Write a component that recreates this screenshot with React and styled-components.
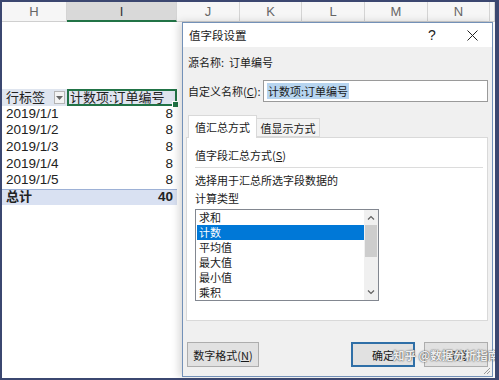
import React from 'react';
import styled, { createGlobalStyle } from 'styled-components';

const GlobalStyle = createGlobalStyle`
  html, body { margin: 0; padding: 0; background: #fff; }
  body { font-family: "Noto Sans CJK SC", sans-serif; }
`;

const Frame = styled.div`
  position: relative;
  width: 499px;
  height: 380px;
  box-sizing: border-box;
  border-style: solid;
  border-color: #3b4770;
  border-width: 2px 4px 2px 2px;
  background: #fff;
  overflow: hidden;
`;

// 列标题栏
const ColumnBar = styled.div`
  display: flex;
  height: 20px;
  background: #f6f6f6;
`;

const ColHead = styled.div`
  flex: ${({ $w }) => ($w ? 'none' : '1')};
  width: ${({ $w }) => ($w ? `${$w}px` : 'auto')};
  box-sizing: border-box;
  border-right: 1px solid #d4d4d4;
  border-bottom: ${({ $active }) => ($active ? '2px solid #217346' : '1px solid #cfcfcf')};
  background: ${({ $active }) => ($active ? '#d9d9d9' : 'transparent')};
  display: flex;
  align-items: center;
  justify-content: center;
  font: 13px "Liberation Sans", sans-serif;
  color: ${({ $active }) => ($active ? '#333' : '#666')};
`;

// 数据透视表
const Pivot = styled.div`
  margin-top: 67px;
  width: 175px;
  font: 13.5px/16px "Liberation Sans", "Noto Sans CJK SC", sans-serif;
  color: #222;
`;

const rowBg = { head: '#dfe5ef', data: 'transparent', total: '#d9e1f2' };

const PivotRow = styled.div`
  display: grid;
  grid-template-columns: 65px 110px;
  height: 16.6px;
  align-items: center;
  overflow: visible;
  background: ${({ $kind }) => rowBg[$kind]};
  font-weight: ${({ $kind }) => ($kind === 'total' ? 700 : 400)};
  box-shadow: ${({ $kind }) => ($kind === 'total' ? 'inset 0 1px 0 #9db1d6' : 'none')};
`;

const LabelCell = styled.div`
  padding-left: 4px;
  height: 16px;
  display: flex;
  align-items: center;
  justify-content: space-between;
  white-space: nowrap;
  font-size: ${({ $cjk }) => ($cjk ? '13px' : 'inherit')};
`;

const ValueCell = styled.div`
  position: relative;
  height: ${({ $selected }) => ($selected ? '17px' : '16px')};
  box-sizing: border-box;
  display: flex;
  align-items: center;
  justify-content: ${({ $selected }) => ($selected ? 'flex-start' : 'flex-end')};
  padding: 0 4px 0 1px;
  border: ${({ $selected }) => ($selected ? '2px solid #217346' : 'none')};
  white-space: nowrap;
  font-size: ${({ $selected }) => ($selected ? '13px' : 'inherit')};
`;

const FillHandle = styled.span`
  position: absolute;
  right: -4px;
  bottom: -4px;
  width: 5px;
  height: 5px;
  background: #217346;
  border: 1px solid #fff;
`;

const FilterButton = styled.span`
  width: 11px;
  height: 13px;
  margin-right: 2px;
  box-sizing: border-box;
  border: 1px solid #b5b5b5;
  background: #f4f4f4;
  display: flex;
  align-items: center;
  justify-content: center;
`;

// 对话框
const Dialog = styled.div`
  position: absolute;
  left: 180px;
  top: 20px;
  width: 311px;
  height: 355px;
  box-sizing: border-box;
  border: 1px solid #7391b8;
  background: #f0f0f0;
  box-shadow: -3px 0 8px rgba(0, 0, 0, 0.16);
  display: flex;
  flex-direction: column;
  font: 11px "Noto Sans CJK SC", sans-serif;
  color: #1a1a1a;
`;

const TitleBar = styled.div`
  height: 24px;
  flex: none;
  background: #fff;
  display: flex;
  align-items: center;
  padding-left: 6px;
`;

const TitleText = styled.div`
  flex: 1;
  font-size: 11.5px;
`;

const TitleButton = styled.div`
  width: 40px;
  height: 24px;
  display: flex;
  align-items: center;
  justify-content: center;
  font: 14px "Liberation Sans", sans-serif;
  color: #222;
`;

const Body = styled.div`
  flex: 1;
  display: flex;
  flex-direction: column;
  padding: 0 4px 0 3px;
`;

const TextRow = styled.div`
  margin: ${({ $mt }) => $mt}px 0 0 ${({ $ml }) => $ml || 0}px;
  line-height: 16px;
  height: 16px;
  white-space: nowrap;
`;

const NameRow = styled.div`
  margin: 10px 0 0 2px;
  height: 22px;
  display: flex;
  align-items: center;
`;

const NameLabel = styled.div`
  width: 75px;
  flex: none;
  white-space: nowrap;
`;

const NameInput = styled.div`
  flex: 1;
  height: 22px;
  box-sizing: border-box;
  border: 1px solid #9a9a9a;
  background: #fff;
  display: flex;
  align-items: center;
  padding-left: 3px;
`;

const Selected = styled.span`
  background: #b7d5f0;
  line-height: 16px;
  padding: 0 1px;
`;

const Tabs = styled.div`
  margin-top: 13px;
  padding-left: 2px;
  display: flex;
  align-items: flex-end;
  height: 22px;
  position: relative;
  z-index: 1;
`;

const Tab = styled.div`
  width: ${({ $w }) => $w}px;
  height: ${({ $active }) => ($active ? 23 : 19)}px;
  box-sizing: border-box;
  border: 1px solid #d9d9d9;
  border-bottom: ${({ $active }) => ($active ? 'none' : '1px solid #d9d9d9')};
  border-left: ${({ $first }) => ($first ? '1px solid #d9d9d9' : 'none')};
  background: ${({ $active }) => ($active ? '#fff' : '#f3f3f3')};
  display: flex;
  align-items: center;
  justify-content: center;
  margin-bottom: ${({ $active }) => ($active ? -1 : 0)}px;
`;

const Panel = styled.div`
  height: 184px;
  box-sizing: border-box;
  border: 1px solid #d9d9d9;
  background: #fff;
  padding: 9px 4px 0 8px;
  display: flex;
  flex-direction: column;
`;

const Separator = styled.div`
  margin-top: 4px;
  height: 1px;
  background: #dcdcdc;
`;

const ListBox = styled.div`
  margin-top: 3px;
  width: 184px;
  height: 92px;
  box-sizing: border-box;
  border: 1px solid #828790;
  display: flex;
`;

const Items = styled.div`
  flex: 1;
  padding-left: 1px;
`;

const Item = styled.div`
  height: 15px;
  line-height: 15px;
  padding-left: 2px;
  background: ${({ $selected }) => ($selected ? '#0078d7' : 'transparent')};
  color: ${({ $selected }) => ($selected ? '#fff' : '#1a1a1a')};
`;

const ScrollBar = styled.div`
  width: 14px;
  background: #f0f0f0;
  display: flex;
  flex-direction: column;
`;

const ScrollArrow = styled.div`
  height: 15px;
  display: flex;
  align-items: center;
  justify-content: center;
`;

const Thumb = styled.div`
  height: 32px;
  margin: 0 1px;
  background: #cdcdcd;
`;

const ScrollTrack = styled.div`
  flex: 1;
`;

const ButtonRow = styled.div`
  margin: 21px 0 0 1px;
  height: 25px;
  display: flex;
  gap: 9px;
`;

const Button = styled.div`
  width: ${({ $w }) => $w}px;
  box-sizing: border-box;
  border: ${({ $primary }) => ($primary ? '2px solid #2f6fa7' : '1px solid #adadad')};
  background: #e1e1e1;
  display: flex;
  align-items: center;
  justify-content: center;
  margin-left: ${({ $push }) => ($push ? 'auto' : '0')};
`;

const Watermark = styled.div`
  position: absolute;
  left: 210px;
  top: 324px;
  font: 700 11.5px "Noto Sans CJK SC", sans-serif;
  color: rgba(255, 255, 255, 0.92);
  text-shadow: 0 0 1px #444, 0 0 2px #777;
  white-space: nowrap;
`;

const Grip = styled.svg`
  position: absolute;
  right: 1px;
  bottom: 1px;
`;

const columns = [
  { id: 'H', w: 65 },
  { id: 'I', w: 110, active: true },
  { id: 'J', w: 63 },
  { id: 'K', w: 62 },
  { id: 'L', w: 63 },
  { id: 'M', w: 63 },
  { id: 'N', w: 62 },
  { id: '' },
];

const rows = ['2019/1/1', '2019/1/2', '2019/1/3', '2019/1/4', '2019/1/5'];
const types = ['求和', '计数', '平均值', '最大值', '最小值', '乘积'];

const Chevron = ({ up }) => (
  <svg width="8" height="5" viewBox="0 0 8 5">
    <path d={up ? 'M1 4.5 L4 1.5 L7 4.5' : 'M1 0.5 L4 3.5 L7 0.5'} fill="none" stroke="#606060" strokeWidth="1.2" />
  </svg>
);

export default function App() {
  return (
    <>
      <GlobalStyle />
      <Frame>
        <ColumnBar>
          {columns.map((c, i) => (
            <ColHead key={i} $w={c.w} $active={c.active}>{c.id}</ColHead>
          ))}
        </ColumnBar>

        <Pivot>
          <PivotRow $kind="head">
            <LabelCell $cjk>
              行标签
              <FilterButton>
                <svg width="7" height="4" viewBox="0 0 7 4"><path d="M0 0 H7 L3.5 4 Z" fill="#666" /></svg>
              </FilterButton>
            </LabelCell>
            <ValueCell $selected>
              计数项:订单编号
              <FillHandle />
            </ValueCell>
          </PivotRow>
          {rows.map((r) => (
            <PivotRow key={r} $kind="data">
              <LabelCell>{r}</LabelCell>
              <ValueCell>8</ValueCell>
            </PivotRow>
          ))}
          <PivotRow $kind="total">
            <LabelCell $cjk>总计</LabelCell>
            <ValueCell>40</ValueCell>
          </PivotRow>
        </Pivot>

        <Dialog>
          <TitleBar>
            <TitleText>值字段设置</TitleText>
            <TitleButton>?</TitleButton>
            <TitleButton>
              <svg width="11" height="11" viewBox="0 0 11 11">
                <path d="M0.5 0.5 L10.5 10.5 M10.5 0.5 L0.5 10.5" stroke="#222" strokeWidth="1" />
              </svg>
            </TitleButton>
          </TitleBar>
          <Body>
            <TextRow $mt={7} $ml={2}>源名称:&nbsp; 订单编号</TextRow>
            <NameRow>
              <NameLabel>自定义名称(<u>C</u>):</NameLabel>
              <NameInput><Selected>计数项:订单编号</Selected></NameInput>
            </NameRow>
            <Tabs>
              <Tab $w={69} $active $first>值汇总方式</Tab>
              <Tab $w={63}>值显示方式</Tab>
            </Tabs>
            <Panel>
              <TextRow $mt={0}>值字段汇总方式(<u>S</u>)</TextRow>
              <Separator />
              <TextRow $mt={4}>选择用于汇总所选字段数据的</TextRow>
              <TextRow $mt={2}>计算类型</TextRow>
              <ListBox>
                <Items>
                  {types.map((t) => (
                    <Item key={t} $selected={t === '计数'}>{t}</Item>
                  ))}
                </Items>
                <ScrollBar>
                  <ScrollArrow><Chevron up /></ScrollArrow>
                  <Thumb />
                  <ScrollTrack />
                  <ScrollArrow><Chevron /></ScrollArrow>
                </ScrollBar>
              </ListBox>
            </Panel>
            <ButtonRow>
              <Button $w={72}>数字格式(<u>N</u>)</Button>
              <Button $w={64} $primary $push>确定</Button>
              <Button $w={64}>取消</Button>
            </ButtonRow>
          </Body>
          <Watermark>知乎 @数据分析指南</Watermark>
          <Grip width="9" height="9" viewBox="0 0 9 9">
            <path d="M8 2 L2 8 M8 5 L5 8" stroke="#9a9a9a" strokeWidth="1" />
          </Grip>
        </Dialog>
      </Frame>
    </>
  );
}
